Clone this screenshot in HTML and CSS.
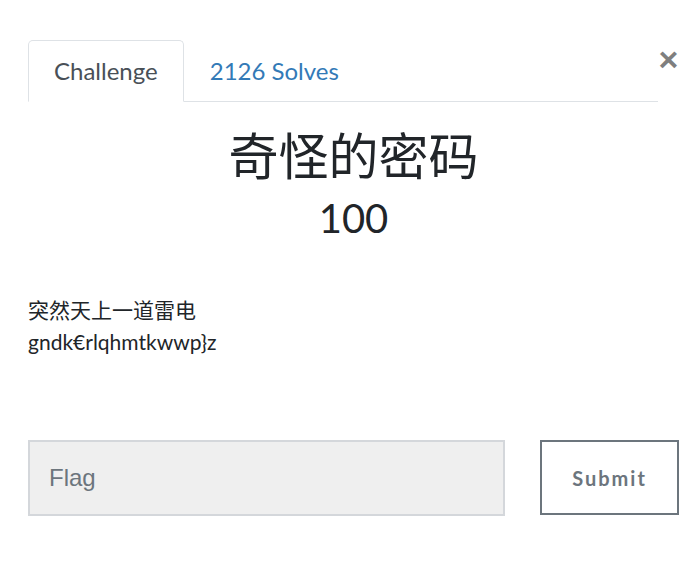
FILE: index.html
```html
<!DOCTYPE html>
<html lang="zh">
<head>
<meta charset="utf-8">
<title>Challenge</title>
<link rel="stylesheet" href="styles.css">
</head>
<body>
<div class="modal">
  <div class="header">
    <ul class="tabs">
      <li class="tab active">Challenge</li>
      <li class="tab link">2126 Solves</li>
    </ul>
    <button class="close" type="button">&times;</button>
  </div>
  <h2 class="name">奇怪的密码</h2>
  <h3 class="value">100</h3>
  <div class="desc">
    <p>突然天上一道雷电<br>gndk€rlqhmtkwwp}z</p>
  </div>
  <form class="submit-row">
    <input class="flag" type="text" placeholder="Flag">
    <button class="submit" type="button">Submit</button>
  </form>
</div>
</body>
</html>
```
FILE: styles.css
```css
html, body {
  margin: 0;
  background: #ffffff;
}
body {
  font-family: Lato, "Noto Sans CJK SC", sans-serif;
  color: #212529;
}
.modal {
  padding: 40px 19px 0 28px;
}
.header {
  display: flex;
  align-items: flex-start;
}
.tabs {
  flex: 1;
  display: flex;
  margin: 0;
  padding: 0;
  list-style: none;
  border-bottom: 1px solid #dee2e6;
}
.tab {
  font-size: 24px;
  line-height: 30px;
  padding: 15px 25px 15px 25px;
  margin-bottom: -1px;
  border: 1px solid transparent;
  border-radius: 5px 5px 0 0;
}
.tab.active {
  color: #495057;
  border-color: #dee2e6 #dee2e6 #ffffff;
  background: #ffffff;
}
.tab.link {
  color: #337ab7;
}
.close {
  width: 21px;
  margin-top: 7px;
  padding: 0;
  border: 0;
  background: none;
  font-family: "Liberation Sans", sans-serif;
  font-size: 34px;
  font-weight: 700;
  line-height: 24px;
  color: #7f7f7f;
  text-align: center;
}
.name {
  margin: 24px 0 0;
  text-align: center;
  font-family: Lato, "Noto Sans CJK SC", sans-serif;
  font-weight: 400;
  font-size: 50px;
  line-height: 60px;
  color: #212529;
}
.value {
  margin: 8px 0 0;
  text-align: center;
  font-weight: 400;
  font-size: 40px;
  line-height: 48px;
  color: #212529;
}
.desc p {
  margin: 52px 0 0;
  font-size: 21px;
  line-height: 32px;
}
.submit-row {
  display: flex;
  align-items: flex-start;
  gap: 35px;
  margin-top: 82px;
}
.flag {
  flex: 1;
  box-sizing: border-box;
  height: 76px;
  margin: 0;
  padding: 0 19px;
  border: 2px solid #d4d7db;
  background: #efefef;
  font-family: "Liberation Sans", Arial, sans-serif;
  font-size: 24px;
  color: #495057;
}
.flag::placeholder {
  color: #6c757d;
}
.submit {
  box-sizing: border-box;
  width: 139px;
  height: 75px;
  border: 2px solid #6c757d;
  background: #ffffff;
  font-family: Lato, sans-serif;
  font-weight: 700;
  font-size: 20px;
  letter-spacing: 2px;
  color: #6c757d;
  padding: 0;
}
```
